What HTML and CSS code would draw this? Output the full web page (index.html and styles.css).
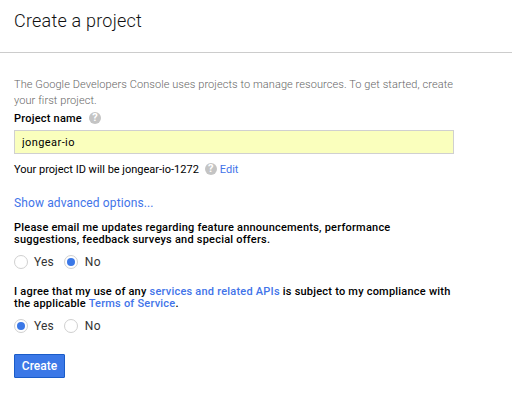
FILE: index.html
```html
<!DOCTYPE html>
<html lang="en">
<head>
<meta charset="utf-8">
<title>Create a project</title>
<link rel="stylesheet" href="styles.css">
</head>
<body>
<header class="header"><h1 class="title">Create a project</h1></header>
<main class="content">
  <p class="intro">The Google Developers Console uses projects to manage resources. To get started, create<br>your first project.</p>
  <div class="label"><label for="name">Project name</label><span class="help">?</span></div>
  <input class="field" id="name" type="text" value="jongear-io">
  <div class="project-id"><span>Your project ID will be jongear-io-1272</span><span class="help">?</span><a class="link">Edit</a></div>
  <a class="link advanced">Show advanced options...</a>
  <p class="question">Please email me updates regarding feature announcements, performance<br>suggestions, feedback surveys and special offers.</p>
  <div class="choices">
    <label class="choice"><span class="radio"></span>Yes</label>
    <label class="choice"><span class="radio checked"></span>No</label>
  </div>
  <p class="question terms">I agree that my use of any <a class="link">services and related APIs</a> is subject to my compliance with<br>the applicable <a class="link">Terms of Service</a>.</p>
  <div class="choices">
    <label class="choice"><span class="radio checked"></span>Yes</label>
    <label class="choice"><span class="radio"></span>No</label>
  </div>
  <button class="create" type="button">Create</button>
</main>
</body>
</html>
```

FILE: styles.css
```css
* { box-sizing: border-box; }
body { margin: 0; background: #fff; color: #000; font: 11px/13px Roboto, "Liberation Sans", sans-serif; }
.header { height: 53px; padding: 10px 14px 0; border-bottom: 1px solid #ccc; }
.title { margin: 0; color: #111; font-size: 18px; line-height: 22px; font-weight: 300; letter-spacing: .22px; }
.content { padding: 24px 14px 0; }
.intro { margin: 0; color: #666; font-weight: 300; line-height: 16px; letter-spacing: .08px; white-space: nowrap; }
.label { display: flex; align-items: center; gap: 7px; height: 18px; margin-bottom: 3px; font-weight: 500; letter-spacing: .22px; }
.help { display: inline-flex; align-items: center; justify-content: center; width: 12px; height: 12px; border-radius: 50%; background: #c4c4c4; color: #fff; font: bold 11px/12px Roboto, sans-serif; letter-spacing: 0; }
.field { display: block; width: 440px; height: 24px; padding: 0 7px; border: 1px solid #d0d0d0; background: #faffbd; color: #000; font: 11px Roboto, sans-serif; letter-spacing: .42px; outline: 0; }
.project-id { display: flex; align-items: center; height: 16px; margin-top: 7px; }
.project-id .help { margin: 0 3px 0 6px; }
.link { color: #4274e9; text-decoration: none; }
.advanced { display: block; margin-top: 18px; font-size: 12px; line-height: 16px; letter-spacing: .12px; }
.question { margin: 11px 0 0; font-weight: 500; line-height: 12px; letter-spacing: .22px; white-space: nowrap; }
.choices { display: flex; gap: 10px; height: 16px; margin-top: 8px; color: #333; font-size: 12px; line-height: 16px; letter-spacing: .15px; }
.choice { display: flex; align-items: center; }
.choice + .choice { letter-spacing: .3px; }
.radio { display: flex; align-items: center; justify-content: center; width: 14px; height: 14px; margin-right: 6px; border: 1px solid #d0d0d0; border-radius: 50%; }
.choice + .choice .radio { margin-right: 7px; }
.checked::after { content: ""; width: 8px; height: 8px; border-radius: 50%; background: #3b78e7; }
.question.terms { margin-top: 16px; }
.create { display: block; width: 51px; height: 24px; margin-top: 20px; padding: 0; border: 1px solid #1a5cc8; border-radius: 1px; background: #3b78e7; color: #fff; font: 500 12px Roboto, sans-serif; }
```
